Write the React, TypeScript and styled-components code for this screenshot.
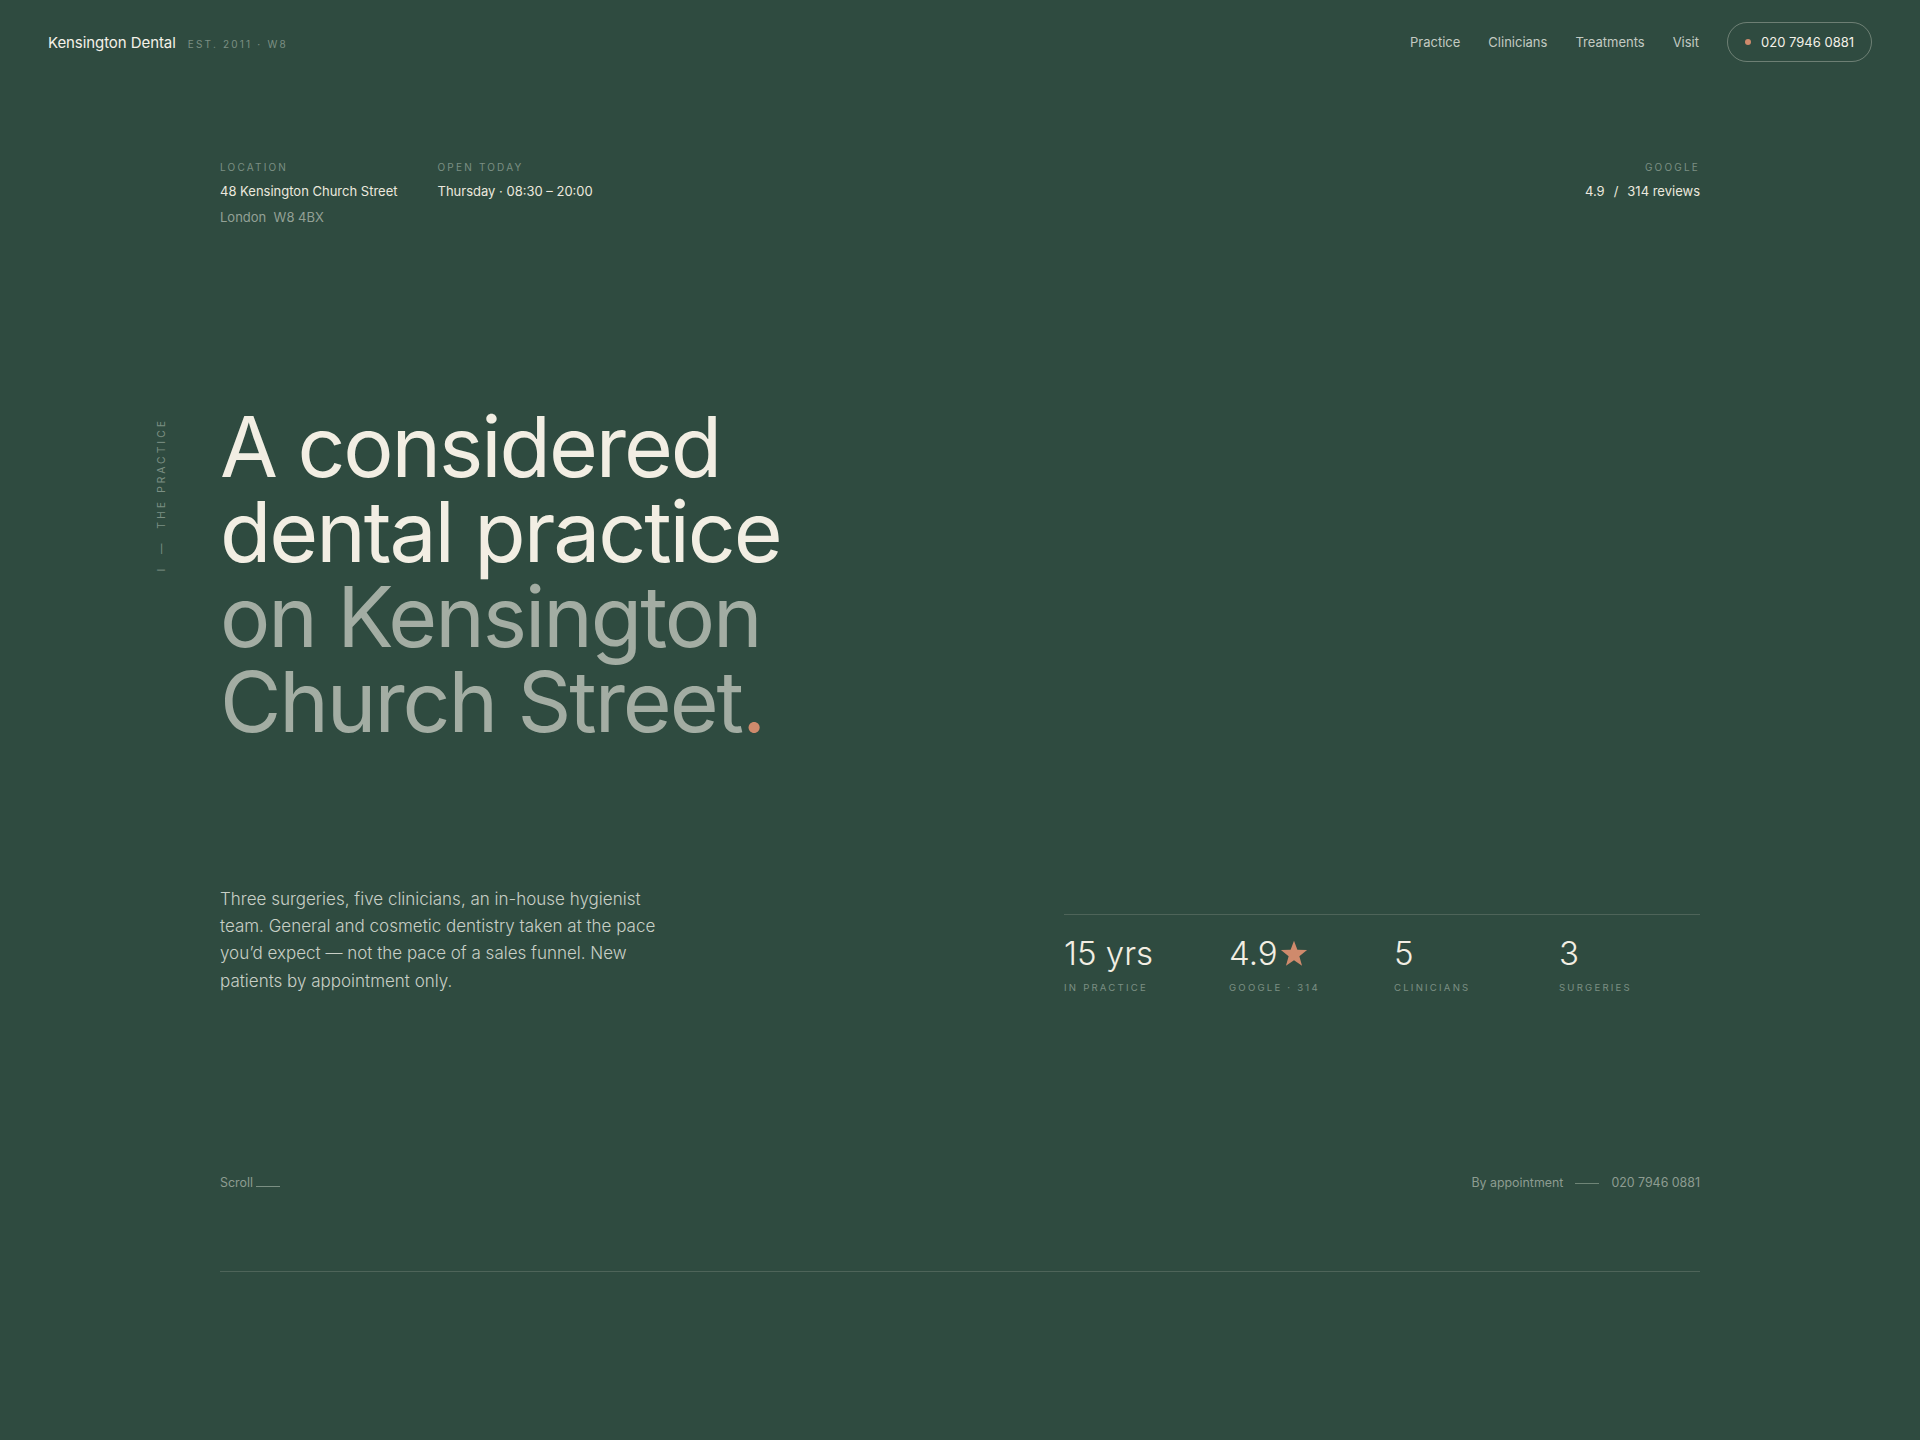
import styled, { createGlobalStyle } from 'styled-components';

const GlobalStyle = createGlobalStyle`
	* {
		box-sizing: border-box;
	}

	html,
	body {
		margin: 0;
		padding: 0;
	}

	body {
		background: #2f4b40;
		color: #f2eee3;
		font-family: Inter, 'Noto Sans', 'Liberation Sans', sans-serif;
		-webkit-font-smoothing: antialiased;
	}
`;

const Page = styled.div`
	min-height: 1440px;
	background: #2f4b40;
`;

const Header = styled.header`
	display: flex;
	align-items: center;
	justify-content: space-between;
	padding: 22px 48px;
`;

const Brand = styled.div`
	display: flex;
	align-items: baseline;
	gap: 12px;
`;

const BrandName = styled.span`
	font-size: 15px;
	color: #f4f1e8;
	letter-spacing: -0.005em;
`;

const BrandMeta = styled.span`
	font-size: 10px;
	letter-spacing: 0.22em;
	color: #7b8f83;
	text-transform: uppercase;
`;

const Nav = styled.nav`
	display: flex;
	align-items: center;
	gap: 28px;
`;

const NavLink = styled.a`
	font-size: 13px;
	color: #c3cac2;
	text-decoration: none;
`;

const CallButton = styled.a`
	display: inline-flex;
	align-items: center;
	gap: 10px;
	height: 40px;
	padding: 0 17px;
	border: 1px solid rgba(242, 238, 227, 0.32);
	border-radius: 999px;
	font-size: 13px;
	color: #f4f1e8;
	text-decoration: none;
`;

const Dot = styled.span`
	width: 6px;
	height: 6px;
	border-radius: 50%;
	background: #cf8a6c;
`;

const Hero = styled.main`
	width: 1480px;
	margin: 0 auto;
	padding-top: 76px;
`;

const MetaRow = styled.div`
	display: flex;
	justify-content: space-between;
	align-items: flex-start;
`;

const MetaGroup = styled.div`
	display: flex;
	gap: 40px;
`;

const MetaItem = styled.div<{ $align?: 'left' | 'right' }>`
	text-align: ${(props) => props.$align ?? 'left'};
`;

const Label = styled.div`
	font-size: 10px;
	line-height: 14px;
	letter-spacing: 0.22em;
	text-transform: uppercase;
	color: #7b8f83;
	margin-bottom: 4px;
`;

const Value = styled.div<{ $muted?: boolean }>`
	font-size: 13px;
	line-height: 26px;
	color: ${(props) => (props.$muted ? '#93a196' : '#ebe8de')};
`;

const Slash = styled.span`
	margin: 0 9px;
`;

const HeadlineRow = styled.div`
	display: flex;
	align-items: flex-start;
	gap: 51px;
	margin: 174px 0 0 -65px;
`;

const SideLabel = styled.div`
	writing-mode: vertical-rl;
	transform: rotate(180deg);
	font-size: 10.5px;
	line-height: 14px;
	letter-spacing: 0.28em;
	color: #7b8f83;
	margin-top: 14px;
	white-space: nowrap;
`;

const Headline = styled.h1`
	margin: 0;
	font-size: 84px;
	line-height: 85px;
	font-weight: 400;
	letter-spacing: -0.025em;
`;

const Line = styled.span<{ $soft?: boolean }>`
	display: block;
	color: ${(props) => (props.$soft ? '#a3ada3' : '#f2eee3')};
`;

const Accent = styled.span`
	color: #cf8a6c;
`;

const Lower = styled.div`
	display: grid;
	grid-template-columns: 1fr 636px;
	align-items: start;
	margin-top: 142px;
`;

const Intro = styled.p`
	margin: 0;
	max-width: 445px;
	font-size: 17px;
	line-height: 27.2px;
	font-weight: 300;
	color: #c8cfc6;
`;

const Stats = styled.div`
	display: grid;
	grid-template-columns: repeat(4, 1fr);
	column-gap: 24px;
	margin-top: 28px;
	padding-top: 21px;
	border-top: 1px solid rgba(242, 238, 227, 0.16);
`;

const StatValue = styled.div`
	display: flex;
	align-items: center;
	gap: 2px;
	font-size: 33px;
	line-height: 35px;
	font-weight: 300;
	color: #f2eee3;
`;

const StatLabel = styled.div`
	margin-top: 10px;
	font-size: 9.6px;
	line-height: 14px;
	letter-spacing: 0.23em;
	text-transform: uppercase;
	color: #7b8f83;
`;

const FootRow = styled.div`
	display: flex;
	justify-content: space-between;
	align-items: center;
	margin-top: 180px;
	font-size: 12.4px;
	line-height: 16px;
	color: #8d9c91;
`;

const Scroll = styled.span`
	display: inline-flex;
	align-items: baseline;
	gap: 3px;
`;

const ScrollLine = styled.span`
	display: inline-block;
	width: 24px;
	height: 1px;
	background: #7b8f83;
`;

const Contact = styled.div`
	display: flex;
	align-items: center;
	gap: 12px;
`;

const Dash = styled.span`
	width: 24px;
	height: 1px;
	background: #6f8577;
`;

const Rule = styled.hr`
	margin: 80px 0 0;
	border: 0;
	height: 1px;
	background: rgba(242, 238, 227, 0.16);
`;

function Star() {
	return (
		<svg width="28" height="27" viewBox="0 0 24 23" aria-hidden="true">
			<polygon
				points="12,0.5 14.9,8.3 23.2,8.6 16.6,13.8 18.9,21.9 12,17.2 5.1,21.9 7.4,13.8 0.8,8.6 9.1,8.3"
				fill="#cf8a6c"
			/>
		</svg>
	);
}

const stats = [
	{ value: '15 yrs', label: 'In practice' },
	{ value: '4.9', label: 'Google · 314', star: true },
	{ value: '5', label: 'Clinicians' },
	{ value: '3', label: 'Surgeries' },
];

export default function App() {
	return (
		<>
			<GlobalStyle />
			<Page>
				<Header>
					<Brand>
						<BrandName>Kensington Dental</BrandName>
						<BrandMeta>Est. 2011 · W8</BrandMeta>
					</Brand>
					<Nav>
						<NavLink href="#practice">Practice</NavLink>
						<NavLink href="#clinicians">Clinicians</NavLink>
						<NavLink href="#treatments">Treatments</NavLink>
						<NavLink href="#visit">Visit</NavLink>
						<CallButton href="tel:02079460881">
							<Dot />
							020 7946 0881
						</CallButton>
					</Nav>
				</Header>

				<Hero>
					<MetaRow>
						<MetaGroup>
							<MetaItem>
								<Label>Location</Label>
								<Value>48 Kensington Church Street</Value>
								<Value $muted>London&nbsp; W8 4BX</Value>
							</MetaItem>
							<MetaItem>
								<Label>Open today</Label>
								<Value>Thursday · 08:30 – 20:00</Value>
							</MetaItem>
						</MetaGroup>
						<MetaItem $align="right">
							<Label>Google</Label>
							<Value>
								4.9<Slash>/</Slash>314 reviews
							</Value>
						</MetaItem>
					</MetaRow>

					<HeadlineRow>
						<SideLabel>I &nbsp;— &nbsp;THE PRACTICE</SideLabel>
						<Headline>
							<Line>A considered</Line>
							<Line>dental practice</Line>
							<Line $soft>on Kensington</Line>
							<Line $soft>
								Church Street<Accent>.</Accent>
							</Line>
						</Headline>
					</HeadlineRow>

					<Lower>
						<Intro>
							Three surgeries, five clinicians, an in-house hygienist team. General and cosmetic dentistry
							taken at the pace you’d expect — not the pace of a sales funnel. New patients by appointment
							only.
						</Intro>
						<Stats>
							{stats.map((stat) => (
								<div key={stat.label}>
									<StatValue>
										{stat.value}
										{stat.star && <Star />}
									</StatValue>
									<StatLabel>{stat.label}</StatLabel>
								</div>
							))}
						</Stats>
					</Lower>

					<FootRow>
						<Scroll>
							Scroll
							<ScrollLine />
						</Scroll>
						<Contact>
							<span>By appointment</span>
							<Dash />
							<span>020 7946 0881</span>
						</Contact>
					</FootRow>

					<Rule />
				</Hero>
			</Page>
		</>
	);
}
